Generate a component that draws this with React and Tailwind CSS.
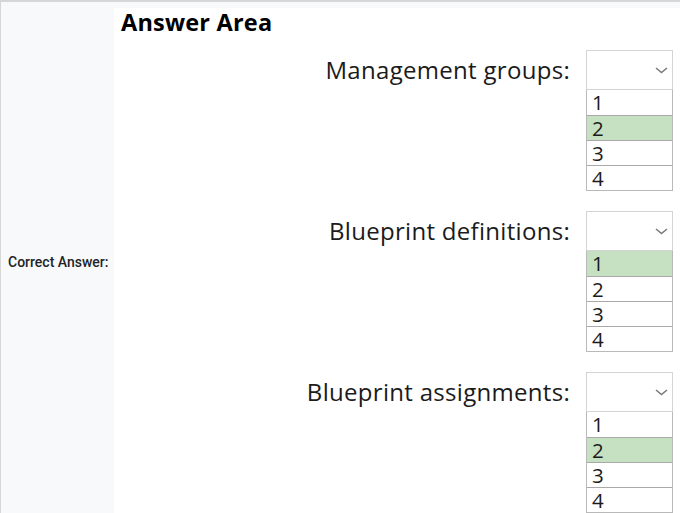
import React from "react";

const groups = [
  { label: "Management groups:", answer: 2 },
  { label: "Blueprint definitions:", answer: 1 },
  { label: "Blueprint assignments:", answer: 2 },
];

function Dropdown({ answer }) {
  return (
    <div className="w-[87px]">
      {/* Closed select box */}
      <div className="h-[40px] border border-[#d4d4d4] flex items-center justify-end pr-[4px]">
        <svg width="13" height="7" viewBox="0 0 13 7" fill="none">
          <polyline points="1,1 6.5,5.5 12,1" stroke="#7a7a7a" strokeWidth="1.6" />
        </svg>
      </div>
      {/* Options list */}
      <div className="border border-t-0 border-[#b9b9b9]">
        {[1, 2, 3, 4].map((n, i) => (
          <div
            key={n}
            className={`h-[25px] leading-[24px] pl-[5px] text-[20.5px] text-[#1b1b1b] ${
              i > 0 ? "border-t border-[#a9a9a9]" : ""
            } ${n === answer ? "bg-[#c5e1c2]" : "bg-white"}`}
          >
            {n}
          </div>
        ))}
      </div>
    </div>
  );
}

export default function App() {
  return (
    <div className="h-[522px] flex border-t-2 border-l border-[#d6d6d6] bg-[#f8f9fa] overflow-hidden">
      {/* Row header */}
      <div
        className="w-[113px] shrink-0 flex items-center pl-[7px] text-[14px] font-medium text-[#212529]"
        style={{ fontFamily: "Roboto, sans-serif" }}
      >
        Correct Answer:
      </div>

      {/* Answer image */}
      <div className="flex-1 pt-[6px]">
        <div
          className="bg-white h-full w-[620px] pl-[7px]"
          style={{ fontFamily: '"Open Sans", "Noto Sans", sans-serif' }}
        >
          <h2 className="text-[23.5px] font-bold text-black leading-[28px] tracking-[0.2px]">Answer Area</h2>

          <div className="flex flex-col gap-[20px] mt-[14px]">
            {groups.map((g) => (
              <div key={g.label} className="flex items-start">
                <div className="w-[449px] h-[40px] flex items-center justify-end text-[24px] tracking-[0.3px] text-[#1b1b1b]">
                  {g.label}
                </div>
                <div className="ml-[16px]">
                  <Dropdown answer={g.answer} />
                </div>
              </div>
            ))}
          </div>
        </div>
      </div>
    </div>
  );
}
